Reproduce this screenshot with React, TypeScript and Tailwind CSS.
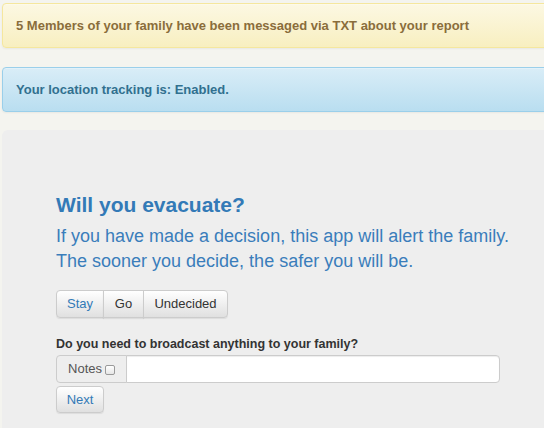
import React from "react";

const font = { fontFamily: '"Liberation Sans", Arial, Helvetica, sans-serif' };

function Btn({ children, blue, className = "" }: { children: React.ReactNode; blue?: boolean; className?: string }) {
  return (
    <button
      className={`h-full flex items-center justify-center border border-[#cccccc] bg-gradient-to-b from-white to-[#e0e0e0] text-[13px] shadow-[inset_0_1px_0_rgba(255,255,255,0.15),0_1px_1px_rgba(0,0,0,0.075)] ${blue ? "text-[#337ab7]" : "text-[#333333]"} ${className}`}
    >
      {children}
    </button>
  );
}

export default function App() {
  return (
    <div className="w-[544px] h-[428px] overflow-hidden bg-[#f4f4ef]" style={font}>
      <div className="w-[620px] ml-[2px] pt-[3px]">
        <div className="rounded-[4px] border border-[#f5e79e] bg-gradient-to-b from-[#fcf8e3] to-[#f8efc0] px-[13px] py-[12px] text-[13px] leading-[19px] font-bold text-[#8a6d3b] shadow-[inset_0_1px_0_rgba(255,255,255,0.25),0_1px_2px_rgba(0,0,0,0.05)]">
          5 Members of your family have been messaged via TXT about your report
        </div>
        <div className="mt-[19px] rounded-[4px] border border-[#9acfea] bg-gradient-to-b from-[#d9edf7] to-[#b9def0] px-[13px] py-[12px] text-[13px] leading-[19px] font-bold text-[#31708f] shadow-[inset_0_1px_0_rgba(255,255,255,0.25),0_1px_2px_rgba(0,0,0,0.05)]">
          Your location tracking is: Enabled.
        </div>
        <div className="mt-[18px] rounded-[6px] bg-[#eeeeee] pl-[54px] pt-[63px] pb-[40px]">
          <h2 className="text-[21px] leading-[24px] font-bold text-[#337ab7]">Will you evacuate?</h2>
          <p className="mt-[7px] text-[18px] leading-[25px] text-[#3a7dbb]">
            If you have made a decision, this app will alert the family.
            <br />
            The sooner you decide, the safer you will be.
          </p>
          <div className="mt-[16px] flex h-[28px]">
            <Btn blue className="w-[48px] rounded-l-[4px]">Stay</Btn>
            <Btn className="w-[41px] -ml-px">Go</Btn>
            <Btn className="w-[85px] -ml-px rounded-r-[4px]">Undecided</Btn>
          </div>
          <div className="mt-[17px] text-[12.5px] leading-[18px] font-bold text-[#333333]">
            Do you need to broadcast anything to your family?
          </div>
          <div className="mt-[2px] flex h-[28px] w-[444px]">
            <div className="w-[71px] flex items-center justify-center gap-[3px] rounded-l-[4px] border border-[#cccccc] bg-[#eeeeee] text-[13px] text-[#555555]">
              <span>Notes</span>
              <span className="inline-block w-[10px] h-[10px] rounded-[2px] border border-[#9a9a9a] bg-gradient-to-b from-white to-[#e6e6e6] mt-[1px]" />
            </div>
            <div className="flex-1 -ml-px rounded-r-[4px] border border-[#cccccc] bg-white shadow-[inset_0_1px_1px_rgba(0,0,0,0.075)]" />
          </div>
          <div className="mt-[3px] flex h-[27px]">
            <Btn blue className="w-[48px] rounded-[4px]">Next</Btn>
          </div>
        </div>
      </div>
    </div>
  );
}
